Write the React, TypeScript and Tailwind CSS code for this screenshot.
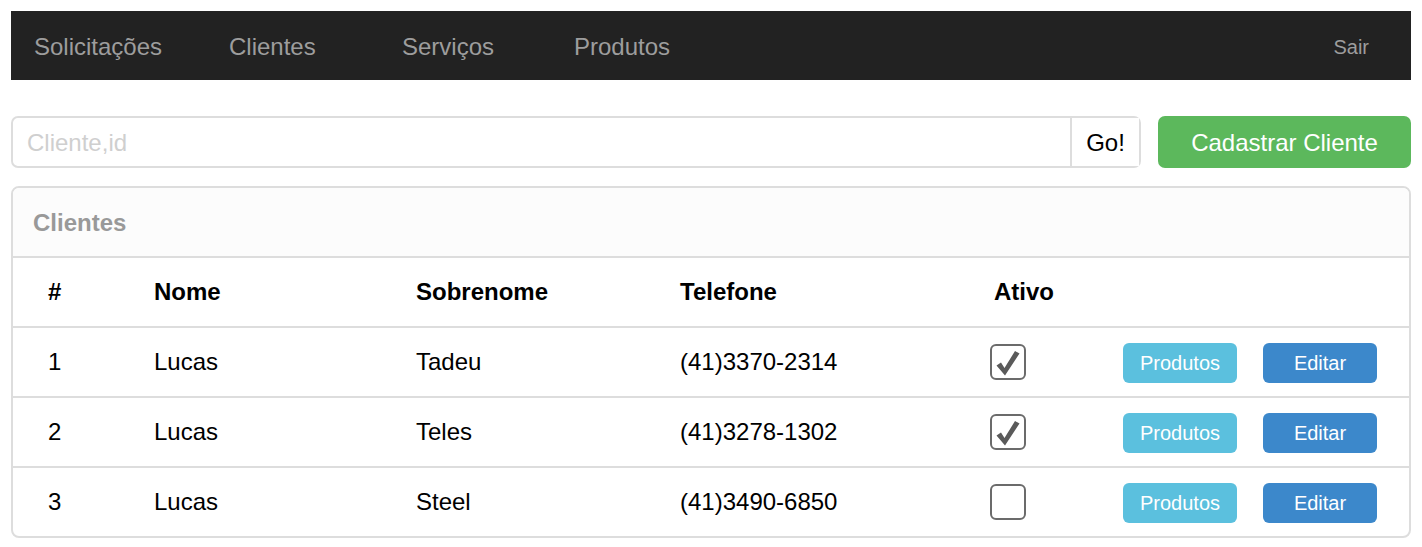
import React from "react";

const clientes = [
  { id: 1, nome: "Lucas", sobrenome: "Tadeu", telefone: "(41)3370-2314", ativo: true },
  { id: 2, nome: "Lucas", sobrenome: "Teles", telefone: "(41)3278-1302", ativo: true },
  { id: 3, nome: "Lucas", sobrenome: "Steel", telefone: "(41)3490-6850", ativo: false },
];

const cols = "grid grid-cols-[106px_262px_264px_314px_129px_140px_1fr] items-center pl-[35px]";

function CheckBox({ checked }: { checked: boolean }) {
  return (
    <div className="-ml-[4px] flex h-[36px] w-[36px] items-center justify-center rounded-[6px] border-2 border-[#6b6b6b] bg-white">
      {checked && (
        <svg width="30" height="30" viewBox="0 0 30 30" className="mt-[1px]">
          <path d="M3.5 17.5 L8 14.5 L11.5 20 L22 3 L26.5 5.5 L12 27.5 Z" fill="#5a5a5a" />
        </svg>
      )}
    </div>
  );
}

export default function App() {
  return (
    <div className="min-h-screen bg-white p-[11px] font-['Liberation_Sans',Arial,sans-serif] text-[24px] text-black">
      {/* Navbar */}
      <nav className="flex h-[69px] items-center bg-[#222222] pl-[23px] pr-[42px] pt-[2px] text-[#9d9d9d]">
        <a className="w-[195px]">Solicitações</a>
        <a className="w-[173px]">Clientes</a>
        <a className="w-[172px]">Serviços</a>
        <a>Produtos</a>
        <a className="ml-auto text-[20px]">Sair</a>
      </nav>

      {/* Search */}
      <div className="mt-[36px] flex h-[52px] gap-[17px]">
        <div className="flex flex-1 rounded-[7px] border-2 border-[#dddddd]">
          <input
            className="min-w-0 flex-1 rounded-l-[7px] bg-white px-[14px] pt-[2px] text-[24px] outline-none placeholder:text-[#cfcfcf]"
            placeholder="Cliente,id"
          />
          <button className="w-[69px] border-l-2 border-[#dddddd] bg-white pt-[2px] text-[24px]">Go!</button>
        </div>
        <button className="w-[253px] rounded-[7px] bg-[#5cb85c] pt-[2px] text-[24px] text-white">Cadastrar Cliente</button>
      </div>

      {/* Panel */}
      <div className="mt-[18px] overflow-hidden rounded-[8px] border-2 border-[#dddddd]">
        <div className="flex h-[68px] items-center bg-[#fcfcfc] px-[20px] pt-[2px] font-bold text-[#999999]">Clientes</div>
        <div className={`${cols} h-[70px] border-t-2 border-[#dddddd] font-bold`}>
          <div>#</div>
          <div>Nome</div>
          <div>Sobrenome</div>
          <div>Telefone</div>
          <div>Ativo</div>
          <div />
          <div />
        </div>
        {clientes.map((c) => (
          <div key={c.id} className={`${cols} h-[70px] border-t-2 border-[#dddddd]`}>
            <div>{c.id}</div>
            <div>{c.nome}</div>
            <div>{c.sobrenome}</div>
            <div>{c.telefone}</div>
            <div>
              <CheckBox checked={c.ativo} />
            </div>
            <div>
              <button className="mt-[2px] h-[40px] w-[114px] rounded-[6px] bg-[#5bc0de] text-[20px] text-white">Produtos</button>
            </div>
            <div>
              <button className="mt-[2px] h-[40px] w-[114px] rounded-[6px] bg-[#3c88cb] text-[20px] text-white">Editar</button>
            </div>
          </div>
        ))}
      </div>
    </div>
  );
}
